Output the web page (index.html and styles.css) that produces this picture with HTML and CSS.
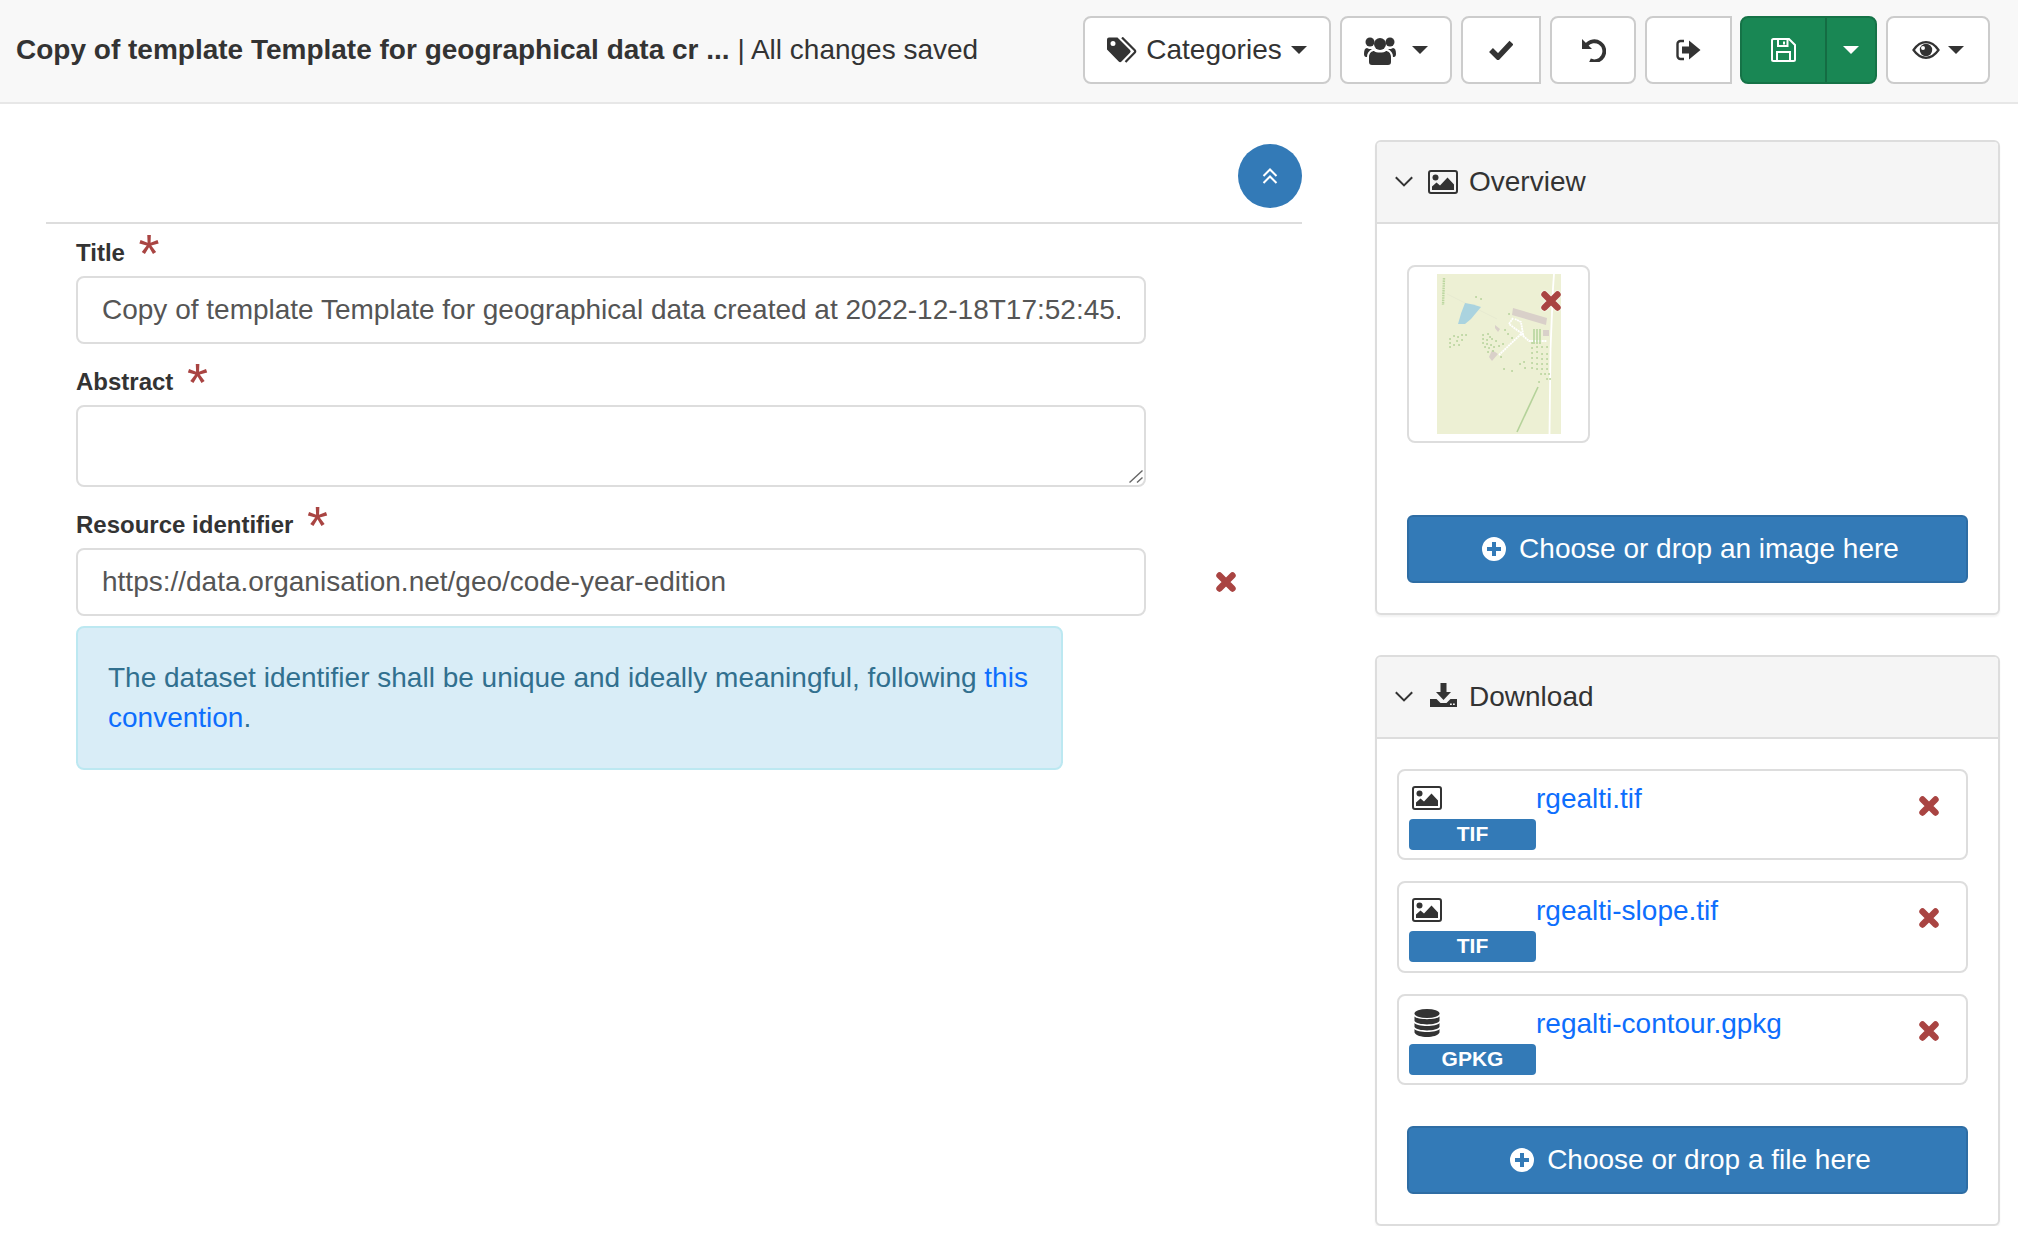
FILE: index.html
```html
<!DOCTYPE html>
<html lang="en">
<head>
    <meta charset="UTF-8">
    <meta name="viewport" content="width=device-width, initial-scale=1.0">
    <title>Editor</title>
    <link rel="stylesheet" href="styles.css">
</head>
<body>
<svg class="icon-defs" aria-hidden="true">
    <symbol id="i-remove" viewBox="0 0 22 22">
        <path d="M4.5 4.5L17.5 17.5M17.5 4.5L4.5 17.5" fill="none" stroke="currentColor" stroke-width="6.4" stroke-linecap="round"/>
    </symbol>
    <symbol id="i-picture" viewBox="0 0 30 24">
        <rect x="1" y="1" width="28" height="22" rx="2" fill="none" stroke="currentColor" stroke-width="2"/>
        <circle cx="7.5" cy="7.5" r="3" fill="currentColor"/>
        <path d="M4 20V16.500L8.500 12.500L12 15.500L19.500 7.500L26 14.500V20Z" fill="currentColor"/>
    </symbol>
    <symbol id="i-plus" viewBox="0 0 24 24">
        <path d="M12 0a12 12 0 1 0 0 24a12 12 0 0 0 0-24zM10 5h4v5h5v4h-5v5h-4v-5H5v-4h5z" fill="currentColor" fill-rule="evenodd"/>
    </symbol>
</svg>

<nav class="navbar">
    <div class="doc-title"><strong>Copy of template Template for geographical data cr ...</strong> | All changes saved</div>
    <div class="nav-actions">
        <button class="btn btn-categories">
            <svg class="nav-icon" width="30" height="26" viewBox="0 0 30 26"><path d="M0 2.500A2 2 0 0 1 2 .5H10.500L23 13a2 2 0 0 1 0 2.800L14.500 24.500a2 2 0 0 1-2.800 0L0 12.500ZM6 4a2.500 2.500 0 1 0 0 5a2.500 2.500 0 0 0 0-5Z" fill="currentColor" fill-rule="evenodd"/><path d="M15 .5L27.500 13a2 2 0 0 1 0 2.800L18.500 25" fill="none" stroke="currentColor" stroke-width="2.200"/></svg>
            Categories <span class="caret"></span>
        </button>
        <button class="btn btn-users">
            <svg class="nav-icon" width="32" height="29" viewBox="0 0 32 29" fill="currentColor"><circle cx="6" cy="6" r="4.500"/><circle cx="26" cy="6" r="4.500"/><circle cx="16" cy="8" r="6"/><path d="M8 29c-2 0-3-1-3-3v-5c0-4 3-6 5-6c2 2 10 2 12 0c2 0 5 2 5 6v5c0 2-1 3-3 3Z"/><path d="M0 18c0-4 1-6 3-6c1 1 3 1 5 1c-3 2-5 4-5 8H2c-1 0-2-1-2-3ZM32 18c0-4-1-6-3-6c-1 1-3 1-5 1c3 2 5 4 5 8h1c1 0 2-1 2-3Z"/></svg>
            <span class="caret caret-users"></span>
        </button>
        <button class="btn btn-square btn-check">
            <svg width="24" height="20" viewBox="0 0 24 20"><path d="M2 10L9 17L22.500 2.500" fill="none" stroke="currentColor" stroke-width="5.500"/></svg>
        </button>
        <button class="btn btn-undo">
            <svg width="25" height="24" viewBox="0 0 25 24"><path d="M5.500 7A10 10 0 1 1 9 22.300" fill="none" stroke="currentColor" stroke-width="3.800"/><path d="M1 1V11H11Z" fill="currentColor"/></svg>
        </button>
        <button class="btn btn-square btn-logout">
            <svg width="25" height="22" viewBox="0 0 25 22"><path d="M8 2H4.500A3 3 0 0 0 1.500 5V17A3 3 0 0 0 4.500 20H8" fill="none" stroke="currentColor" stroke-width="2.400"/><path d="M6 7.500H13V1.500L24.500 11L13 20.500V14.500H6Z" fill="currentColor"/></svg>
        </button>
        <div class="save-group">
            <button class="btn-save">
                <svg width="25" height="24" viewBox="0 0 25 24"><path d="M2.500 1H18L24 7V21.500A1.500 1.500 0 0 1 22.500 23H2.500A1.500 1.500 0 0 1 1 21.500V2.500A1.500 1.500 0 0 1 2.500 1ZM7 1.500V8H16.500V1.500M13 3.500V6.500M6 23V14H19V23" fill="none" stroke="currentColor" stroke-width="2"/></svg>
            </button>
            <button class="btn-save-caret"><span class="caret"></span></button>
        </div>
        <button class="btn btn-eye">
            <svg width="28" height="18" viewBox="0 0 28 18"><path d="M1.500 9C5 4 9 1.200 14 1.200S23 4 26.500 9C23 14 19 16.800 14 16.800S5 14 1.500 9Z" fill="none" stroke="currentColor" stroke-width="2.200"/><path d="M14 2.800a6.200 6.200 0 1 0 0 12.400a6.200 6.200 0 0 0 0-12.400ZM11 5a2 2 0 1 1 0 4a2 2 0 0 1 0-4Z" fill="currentColor" fill-rule="evenodd"/></svg>
            <span class="caret"></span>
        </button>
    </div>
</nav>

<main class="page">
    <section class="form-col">
        <div class="form-top">
            <button class="btn-round">
                <svg width="16" height="16" viewBox="0 0 16 16"><path d="M1.500 8L8 1.500L14.500 8M1.500 15L8 8.500L14.500 15" fill="none" stroke="currentColor" stroke-width="2"/></svg>
            </button>
        </div>
        <form class="fields">
            <div class="field field-first">
                <label class="field-label">Title <span class="required">*</span></label>
                <input class="form-control" type="text" value="Copy of template Template for geographical data created at 2022-12-18T17:52:45.">
            </div>
            <div class="field">
                <label class="field-label">Abstract <span class="required">*</span></label>
                <div class="area-wrap">
                    <textarea class="form-control form-area"></textarea>
                    <svg class="area-grip" width="14" height="13" viewBox="0 0 14 13"><path d="M.5 12.500L13.500 .5M8 12.500L13.500 7.500" fill="none" stroke="#666" stroke-width="1.400"/></svg>
                </div>
            </div>
            <div class="field field-last">
                <label class="field-label">Resource identifier <span class="required">*</span></label>
                <div class="input-row">
                    <input class="form-control" type="text" value="https://data.organisation.net/geo/code-year-edition">
                    <svg class="remove remove-input"><use href="#i-remove"/></svg>
                </div>
                <div class="alert">The dataset identifier shall be unique and ideally meaningful, following <a href="#">this</a> <a href="#">convention</a>.</div>
            </div>
        </form>
    </section>

    <aside class="side-col">
        <div class="panel panel-overview">
            <div class="panel-heading">
                <svg class="chevron" width="18" height="11" viewBox="0 0 18 11"><path d="M.8 1.200L9 9.400L17.200 1.200" fill="none" stroke="currentColor" stroke-width="2"/></svg>
                <svg class="heading-icon" width="30" height="24"><use href="#i-picture"/></svg>
                Overview
            </div>
            <div class="panel-body">
                <div class="thumb">
                    <svg class="map" width="124" height="160" viewBox="0 0 124 160">
                        <rect width="124" height="160" fill="#edf0d4"/>
                        <path d="M10 20L60 45" stroke="#e3e6cf" stroke-width=".6"/>
                        <path d="M28 29Q36 30 44 33L34 45L28 50H21Q24 38 28 29Z" fill="#aad3df"/>
                        <path d="M76 34L110 44L109 51L75 41Z" fill="#d9d0c9"/>
                        <path d="M58 51L63 55L61 58L58 54ZM55 76L61 80L55 87L52 83Z" fill="#d9d0c9"/>
                        <path d="M106 56H112V62H106Z" fill="#d9d0c9"/>
                        <path d="M117 0L116 14L113.500 75L112.500 160" fill="none" stroke="#fff" stroke-width="1.800"/>
                        <path d="M101 113L80 158" stroke="#b5d29a" stroke-width="1.600"/>
                        <path d="M7 4L6 31" stroke="#bcd7a0" stroke-width="2.400" stroke-dasharray="1.600 .8"/>
                        <path d="M76 44L72 50L80 56L86 60L84 48L78 45M84 60L92 67H110M84 60L62 81" fill="none" stroke="#fff" stroke-width="1.800" stroke-dasharray="2 .6"/>
                        <path d="M97 55V70M100 55V70M103 55V70" stroke="#aed096" stroke-width="1.400"/>
                        <path d="M39 23h.1M44 25h.1M13 65h.1M17 62h.1M21 63h.1M25 61h.1M29 61h.1M13 69h.1M20 67h.1M25 66h.1M13 73h.1M17 71h.1M22 71h.1M46 61h.1M51 60h.1M53 63h.1M46 65h.1M50 66h.1M55 65h.1M46 69h.1M50 70h.1M54 71h.1M59 67h.1M48 73h.1M52 74h.1M57 73h.1M62 72h.1M66 70h.1M51 78h.1M56 77h.1M71 60h.1M75 64h.1M68 56h.1M72 40h.1M64 83h.1M67 95h.1M75 97h.1M83 90h.1M87 88h.1M88 94h.1M95 69h.1M95 74h.1M95 79h.1M95 84h.1M95 89h.1M95 94h.1M100 73h.1M100 78h.1M100 84h.1M100 90h.1M100 95h.1M105 73h.1M105 80h.1M105 85h.1M105 90h.1M105 95h.1M110 73h.1M110 80h.1M110 85h.1M110 90h.1M110 95h.1M104 100h.1M108 100h.1M112 100h.1M110 105h.1M113 105h.1M102 108h.1" stroke="#b5d29a" stroke-width="1.800" stroke-linecap="round"/>
                    </svg>
                    <svg class="remove remove-thumb"><use href="#i-remove"/></svg>
                </div>
                <button class="btn-primary btn-upload-image">
                    <svg width="24" height="24"><use href="#i-plus"/></svg>
                    Choose or drop an image here
                </button>
            </div>
        </div>

        <div class="panel panel-download">
            <div class="panel-heading">
                <svg class="chevron" width="18" height="11" viewBox="0 0 18 11"><path d="M.8 1.200L9 9.400L17.200 1.200" fill="none" stroke="currentColor" stroke-width="2"/></svg>
                <svg class="heading-icon icon-download" width="27" height="24" viewBox="0 0 27 24"><path d="M10.500 0H16.500V9H21L13.500 17L6 9H10.500ZM0 16H6.500L10.500 20H16.500L20.500 16H27V24H0ZM20 20.500v1.500h1.800v-1.500ZM23 20.500v1.500h1.800v-1.500Z" fill="currentColor" fill-rule="evenodd"/></svg>
                Download
            </div>
            <div class="panel-body file-body">
                <div class="file-row">
                    <div class="file-type">
                        <svg class="file-icon" width="30" height="24"><use href="#i-picture"/></svg>
                        <span class="badge">TIF</span>
                    </div>
                    <a class="file-link" href="#">rgealti.tif</a>
                    <svg class="remove remove-file"><use href="#i-remove"/></svg>
                </div>
                <div class="file-row file-row-tall">
                    <div class="file-type">
                        <svg class="file-icon" width="30" height="24"><use href="#i-picture"/></svg>
                        <span class="badge">TIF</span>
                    </div>
                    <a class="file-link" href="#">rgealti-slope.tif</a>
                    <svg class="remove remove-file"><use href="#i-remove"/></svg>
                </div>
                <div class="file-row">
                    <div class="file-type">
                        <svg class="file-icon icon-db" width="30" height="28" viewBox="0 0 30 28" fill="currentColor"><ellipse cx="15" cy="4.500" rx="12.500" ry="4.500"/><path d="M2.500 7.500C5 11 25 11 27.500 7.500V12C25 16.500 5 16.500 2.500 12ZM2.500 14C5 18 25 18 27.500 14V18C25 22.500 5 22.500 2.500 18ZM2.500 20C5 24 25 24 27.500 20V23.500C25 29.500 5 29.500 2.500 23.500Z"/></svg>
                        <span class="badge">GPKG</span>
                    </div>
                    <a class="file-link" href="#">regalti-contour.gpkg</a>
                    <svg class="remove remove-file"><use href="#i-remove"/></svg>
                </div>
                <button class="btn-primary btn-upload-file">
                    <svg width="24" height="24"><use href="#i-plus"/></svg>
                    Choose or drop a file here
                </button>
            </div>
        </div>
    </aside>
</main>
</body>
</html>
```

FILE: styles.css
```css
* {
    box-sizing: border-box;
}

body {
    margin: 0;
    font-family: "Liberation Sans", Arial, sans-serif;
    font-size: 28px;
    line-height: 40px;
    color: #333;
    background-color: #fff;
}

button {
    font: inherit;
    cursor: pointer;
}

a {
    color: #0d6efd;
    text-decoration: none;
}

.icon-defs {
    display: none;
}

/* top bar */
.navbar {
    display: flex;
    align-items: center;
    justify-content: space-between;
    height: 104px;
    padding: 0 28px 2px 16px;
    background-color: #f8f8f8;
    border-bottom: 2px solid #e7e7e7;
}

.nav-actions {
    display: flex;
    gap: 9px;
}

.btn {
    display: flex;
    align-items: center;
    justify-content: center;
    height: 68px;
    padding: 0;
    color: #333;
    background-color: #fff;
    border: 2px solid #ccc;
    border-radius: 8px;
}

.btn-categories {
    width: 248px;
    gap: 9px;
}

.btn-users {
    width: 112px;
    gap: 16px;
}

.btn-check {
    width: 80px;
}

.btn-undo {
    width: 86px;
}

.btn-logout {
    width: 87px;
}

.btn-eye {
    width: 104px;
    gap: 8px;
}

.btn-square {
    border-top-right-radius: 0;
    border-bottom-right-radius: 0;
}

.caret {
    display: inline-block;
    border-top: 8px solid currentColor;
    border-left: 8px solid transparent;
    border-right: 8px solid transparent;
}

.save-group {
    display: flex;
    height: 68px;
    margin-left: -1px;
    color: #fff;
    background-color: #198754;
    border: 2px solid #157347;
    border-radius: 8px;
}

.btn-save,
.btn-save-caret {
    display: flex;
    align-items: center;
    justify-content: center;
    padding: 0;
    color: #fff;
    background: none;
    border: none;
}

.btn-save {
    width: 83px;
}

.btn-save-caret {
    width: 50px;
    border-left: 2px solid #146c43;
}

/* left column */
.page {
    display: flex;
    gap: 73px;
    padding: 36px 18px 0 46px;
}

.form-col {
    width: 1256px;
}

.form-top {
    display: flex;
    justify-content: flex-end;
    padding: 4px 0 14px;
    border-bottom: 2px solid #ddd;
}

.btn-round {
    display: flex;
    align-items: center;
    justify-content: center;
    width: 64px;
    height: 64px;
    padding: 0 0 1px;
    color: #fff;
    background-color: #337ab7;
    border: none;
    border-radius: 50%;
}

.fields {
    padding-left: 30px;
}

.field {
    margin-top: 22px;
}

.field-first {
    margin-top: 13px;
}

.field-last {
    margin-top: 22px;
}

.field-label {
    display: block;
    height: 32px;
    margin-bottom: 7px;
    font-size: 24px;
    line-height: 32px;
    font-weight: bold;
}

.required {
    margin-left: 7px;
    font-size: 54px;
    line-height: 0;
    font-weight: normal;
    vertical-align: -11px;
    color: #a94442;
}

.form-control {
    display: block;
    width: 1070px;
    height: 68px;
    padding: 0 24px;
    font: inherit;
    color: #555;
    background-color: #fff;
    border: 2px solid #ddd;
    border-radius: 8px;
}

.form-area {
    height: 82px;
    resize: none;
}

.area-wrap {
    position: relative;
    width: 1070px;
}

.area-grip {
    position: absolute;
    right: 3px;
    bottom: 4px;
    pointer-events: none;
}

.input-row {
    display: flex;
    align-items: center;
}

.remove {
    display: block;
    width: 22px;
    height: 22px;
    color: #a94442;
}

.remove-input {
    margin-left: 69px;
}

.alert {
    width: 987px;
    margin-top: 10px;
    padding: 30px;
    color: #31708f;
    background-color: #d9edf7;
    border: 2px solid #bce8f1;
    border-radius: 8px;
}

/* right column */
.side-col {
    width: 625px;
}

.panel {
    background-color: #fff;
    border: 2px solid #ddd;
    border-radius: 6px;
    box-shadow: 0 2px 2px rgba(0, 0, 0, .05);
}

.panel-overview {
    height: 475px;
    margin-bottom: 40px;
}

.panel-download {
    height: 571px;
}

.panel-heading {
    display: flex;
    align-items: center;
    height: 82px;
    padding-left: 18px;
    background-color: #f5f5f5;
    border-bottom: 2px solid #ddd;
    border-radius: 4px 4px 0 0;
}

.chevron {
    margin-right: 15px;
    margin-bottom: 2px;
}

.heading-icon {
    margin-right: 11px;
}

.icon-download {
    margin-left: 2px;
    margin-right: 12px;
    margin-bottom: 4px;
}

.panel-body {
    padding: 41px 30px 0;
}

.thumb {
    position: relative;
    display: flex;
    justify-content: center;
    align-items: center;
    width: 183px;
    height: 178px;
    margin-bottom: 72px;
    background-color: #fff;
    border: 2px solid #ddd;
    border-radius: 8px;
}

.remove-thumb {
    position: absolute;
    top: 23px;
    right: 26px;
    filter: drop-shadow(0 0 1px #fff);
}

.btn-primary {
    display: flex;
    align-items: center;
    justify-content: center;
    gap: 13px;
    width: 561px;
    height: 68px;
    padding: 0 0 0 6px;
    color: #fff;
    background-color: #337ab7;
    border: 2px solid #2e6da4;
    border-radius: 6px;
}

.file-body {
    padding: 30px 0 0 20px;
}

.file-row {
    display: flex;
    width: 571px;
    height: 91px;
    margin-bottom: 21px;
    padding-left: 10px;
    border: 2px solid #ddd;
    border-radius: 8px;
}

.file-row-tall {
    height: 92px;
}

.file-type {
    display: flex;
    flex-direction: column;
    flex-shrink: 0;
    width: 127px;
}

.file-icon {
    height: 24px;
    margin: 15px 0 9px 3px;
}

.icon-db {
    height: 28px;
    margin: 13px 0 7px 3px;
}

.badge {
    display: block;
    height: 31px;
    font-size: 21px;
    line-height: 29px;
    font-weight: bold;
    text-align: center;
    color: #fff;
    background-color: #337ab7;
    border-radius: 4px;
}

.file-link {
    margin-top: 8px;
    line-height: 40px;
    height: 40px;
}

.remove-file {
    margin: 24px 26px 0 auto;
}

.btn-upload-file {
    margin: 41px 0 0 10px;
}
```
